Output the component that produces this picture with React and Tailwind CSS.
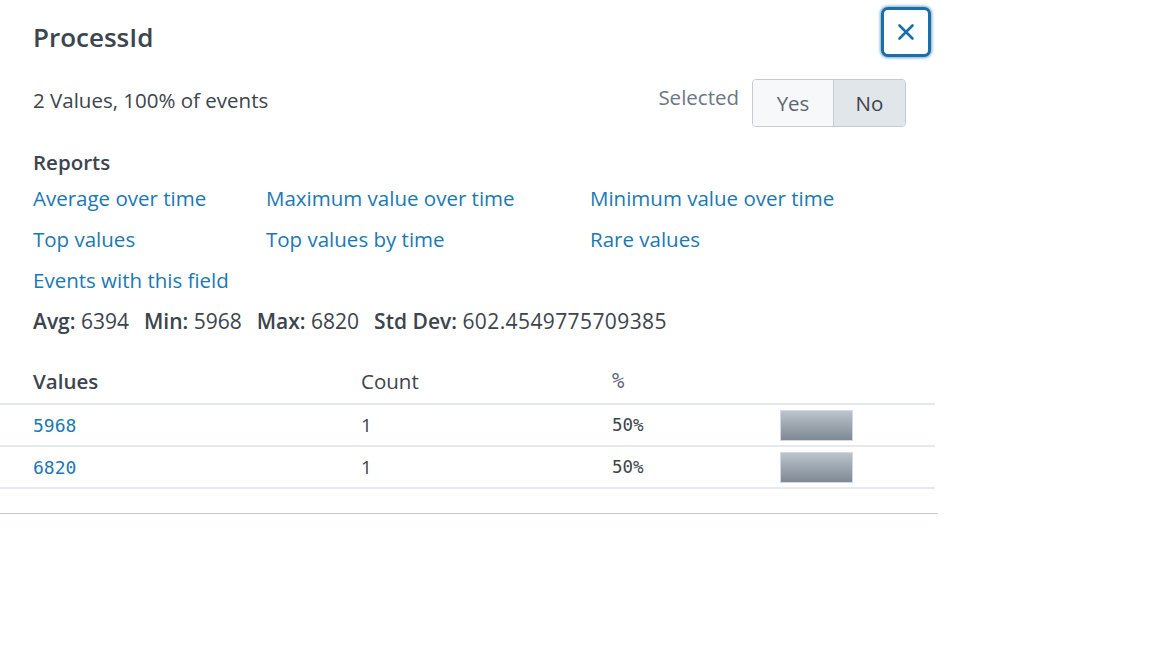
import React, { useState } from 'react';

const reports = [
  ['Average over time', 'Maximum value over time', 'Minimum value over time'],
  ['Top values', 'Top values by time', 'Rare values'],
  ['Events with this field', '', ''],
];

const rows = [
  { value: '5968', count: 1, pct: 50 },
  { value: '6820', count: 1, pct: 50 },
];

const mono = { fontFamily: '"DejaVu Sans Mono", monospace' };

function CloseIcon() {
  return (
    <svg width="20" height="20" viewBox="0 0 20 20" fill="none">
      <path d="M3.5 3.5 L16.5 16.5 M16.5 3.5 L3.5 16.5" stroke="#1a6fa8" strokeWidth="2.6" strokeLinecap="round" />
    </svg>
  );
}

export default function App() {
  const [selected, setSelected] = useState('no');

  return (
    <div className="w-[1152px] h-[648px] bg-white text-[#3c444d]" style={{ fontFamily: '"Open Sans", sans-serif' }}>
      <div className="w-[938px] border-b border-[#c3cbd4] pb-[24px]">
        {/* header */}
        <div className="flex items-start justify-between pl-[33px] pr-[7px] pt-[7px]">
          <h1 className="text-[26px] font-semibold leading-none mt-[17px] text-[#3c444d]">ProcessId</h1>
          <button className="w-[50px] h-[50px] rounded-[7px] border-[3px] border-[#1a6fa8] bg-white flex items-center justify-center shadow-[0_0_3px_1px_rgba(26,111,168,0.6)]">
            <CloseIcon />
          </button>
        </div>

        <div className="flex items-center justify-between pl-[33px] pr-[32px] mt-[22px]">
          <div className="text-[20.5px] leading-[24px] -mt-[6px]">2 Values, 100% of events</div>
          <div className="flex items-center gap-[13px]">
            <span className="text-[20.5px] text-[#6b7785] -mt-[11px]">Selected</span>
            <div className="flex h-[48px] rounded-[4px] border border-[#c3cbd4] overflow-hidden text-[20.5px]">
              <button
                onClick={() => setSelected('yes')}
                className={`w-[80px] ${selected === 'yes' ? 'bg-[#e1e6eb] text-[#3c444d]' : 'bg-[#f7f8fa] text-[#5c6773]'}`}
              >
                Yes
              </button>
              <button
                onClick={() => setSelected('no')}
                className={`w-[72px] border-l border-[#c3cbd4] ${selected === 'no' ? 'bg-[#e1e6eb] text-[#3c444d]' : 'bg-[#f7f8fa] text-[#5c6773]'}`}
              >
                No
              </button>
            </div>
          </div>
        </div>

        <div className="pl-[33px] mt-[23px]">
          <div className="text-[20.5px] font-semibold leading-[24px]">Reports</div>
          <div className="mt-[12px] flex flex-col gap-[17px]">
            {reports.map((r, i) => (
              <div key={i} className="grid grid-cols-[233px_324px_1fr] text-[20.5px] leading-[24px] text-[#1a78b4]">
                {r.map((t, j) => (
                  <a key={j} href="#" className="hover:underline">{t}</a>
                ))}
              </div>
            ))}
          </div>
          <div className="mt-[17px] text-[21px] leading-[24px] flex gap-[15px]">
            <span><b className="font-semibold">Avg:</b> 6394</span>
            <span><b className="font-semibold">Min:</b> 5968</span>
            <span><b className="font-semibold">Max:</b> 6820</span>
            <span><b className="font-semibold">Std Dev:</b> <span className="tracking-[0.4px]">602.4549775709385</span></span>
          </div>
        </div>

        <div className="mt-[29px] w-[935px]">
          <div className="grid grid-cols-[361px_251px_168px_1fr] items-center h-[43px] pb-[2px] text-[20.5px] border-b-2 border-[#e6eaee]">
            <div className="pl-[33px] font-semibold">Values</div>
            <div>Count</div>
            <div className="text-[#5c6773]" style={mono}>%</div>
            <div />
          </div>
          {rows.map((r) => (
            <div key={r.value} className="grid grid-cols-[361px_251px_168px_1fr] items-center h-[42px] border-b-2 border-[#e6eaee]">
              <div className="pl-[33px] text-[18px] text-[#1a78b4]" style={mono}>{r.value}</div>
              <div className="text-[19px]">{r.count}</div>
              <div className="text-[17.5px]" style={mono}>{r.pct}%</div>
              <div>
                <div className="h-[31px] bg-gradient-to-b from-[#bcc4cd] to-[#7f8994] border border-[#d3d9df]" style={{ width: `${r.pct * 1.46}px` }} />
              </div>
            </div>
          ))}
        </div>
      </div>
    </div>
  );
}
